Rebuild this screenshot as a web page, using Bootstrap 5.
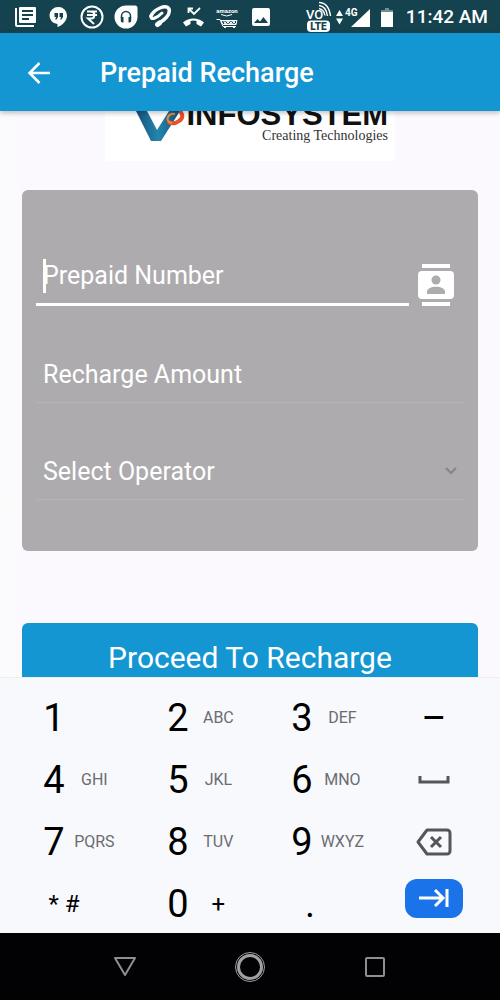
<!DOCTYPE html>
<html lang="en">
<head>
<meta charset="utf-8">
<meta name="viewport" content="width=device-width, initial-scale=1">
<title>Prepaid Recharge</title>
<link href="https://cdn.jsdelivr.net/npm/bootstrap@5.3.0/dist/css/bootstrap.min.css" rel="stylesheet">
<style>
  :root { --brand: #1496d3; }
  body { font-family: Roboto, sans-serif; background: #fbf9fe; }
  .screen { height: 100vh; }
  .status-bar { background: #14434f; height: 33px; padding-left: 14px; padding-right: 12px; }
  .status-bar svg { display: block; flex: none; }
  .notices { gap: 10px; }
  .clock { font-size: 19px; font-weight: 500; line-height: 24px; }
  .app-bar { background: var(--brand); height: 78px; padding: 2px 24px 0; z-index: 2; box-shadow: 0 2px 5px rgba(0,0,0,.25); }
  .app-title { font-size: 27px; font-weight: 500; line-height: 36px; margin-left: 46px; }
  .content-area { flex: 1 1 0; min-height: 0; padding: 0 22px; background: linear-gradient(90deg, #fcfbfb, #fbf9fe 24px); }
  .brand-logo { width: 290px; height: 50px; background: #fff; padding-right: 7px; padding-bottom: 16px; }
  .brand-mark { width: 56px; height: 34px; align-self: flex-end; }
  .brand-name { font: bold 31px/24px "Liberation Sans", sans-serif; color: #111; }
  .brand-tag { font: 14px/18px "Liberation Serif", serif; color: #333; }
  .recharge-card { background: #adabae; border-radius: 6px; margin-top: 29px; padding: 58px 12px 51px 14px; }
  .field, .field:focus { background: transparent; border: 0; border-bottom: 1px solid #b4b3b6; border-radius: 0; box-shadow: none; color: #fff; font-size: 25px; line-height: 32px; padding: 11px 7px; height: 56px; }
  .field::placeholder { color: #fff; opacity: 1; }
  .field-active, .field-active:focus { border-bottom: 3px solid #fff; height: 58px; }
  .caret { left: 7px; top: 11px; width: 3px; height: 34px; background: #fff; }
  .field-stack { gap: 41px; }
  .chevron { right: 7px; top: 22px; pointer-events: none; }
  .contacts { margin: 0 10px 0 8px; }
  .proceed { background: var(--brand); color: #fff; font-size: 30px; line-height: 36px; padding: 17px; border: 0; border-radius: 6px; margin-top: 72px; }
  .proceed:hover { background: #1087c0; color: #fff; }
  .keypad { background: #f8f9fd; border-top: 1px solid #eceef1; padding: 9px 4px 0 0; height: 256px; z-index: 2; }
  .key { height: 62px; border: 0; background: none; padding: 0; color: #000; font-size: 38px; line-height: 44px; }
  .key-digit { padding-left: 43px; text-align: left; }
  .key-digit > span { width: 22px; text-align: center; }
  .key-digit > small { width: 60px; text-align: center; font-size: 16px; line-height: 20px; color: #6b6c70; }
  .key .sign { font-size: 24px; color: #000; }
  .key-next { background: #1a73e8; border: 0; border-radius: 12px; width: 58px; height: 39px; margin-bottom: 12px; }
  .system-nav { background: #020103; height: 67px; }
</style>
</head>
<body>
<div class="screen d-flex flex-column overflow-hidden">

  <div class="status-bar d-flex align-items-center justify-content-between text-white flex-shrink-0">
    <div class="notices d-flex align-items-center">
      <svg width="23" height="24" viewBox="0 0 23 24" fill="#fff"><path d="M6 2h15a1 1 0 0 1 1 1v14a1 1 0 0 1-1 1H6a1 1 0 0 1-1-1V3a1 1 0 0 1 1-1zm2 3v2h11V5zm0 4v2h11V9zm0 4v2h7v-2z" fill-rule="evenodd"/><path d="M1 3h2v17h17v2H3a2 2 0 0 1-2-2z"/></svg>
      <svg width="23" height="24" viewBox="0 0 23 24"><path d="M11.500 2a8.500 8.500 0 0 0-1 17v3c5-2 9.500-6 9.500-11.500A8.500 8.500 0 0 0 11.500 2z" fill="#fff"/><path d="M7.500 8h3.500v4l-1.500 2.500H8.200L9 12H7.500zM12.500 8H16v4l-1.500 2.500h-1.300L14 12h-1.500z" fill="#14434f"/></svg>
      <svg width="24" height="24" viewBox="0 0 24 24" fill="none" stroke="#fff"><circle cx="12" cy="12" r="10.500" stroke-width="2"/><path d="M7 6.500h10M7 10h10M8 6.500h3c4.500 0 4.500 7 0 7H8l6 5.500" stroke-width="2"/></svg>
      <svg width="24" height="24" viewBox="0 0 24 24"><path d="M12 .5h9a2.500 2.500 0 0 1 2.500 2.500v9A11.500 11.500 0 1 1 12 .5z" fill="#fff"/><path d="M7.500 13v-2a4.500 4.500 0 0 1 9 0v2" fill="none" stroke="#14434f" stroke-width="1.500"/><path d="M6.800 12h2.700v5.500H8.500a1.700 1.700 0 0 1-1.700-1.700zM14.500 12h2.700v3.800a1.700 1.700 0 0 1-1.700 1.700h-1z" fill="#14434f"/></svg>
      <svg width="24" height="24" viewBox="0 0 24 24" fill="none" stroke="#fff" stroke-linecap="round" stroke-linejoin="round"><path d="M3 11C6 4 18-1 21 4c2 6-6 12-10 14" stroke-width="3.500"/><path d="M3 11c-1 5 6 2 11-3" stroke-width="3"/><path d="M9.500 19.500l2-1.500" stroke-width="5"/></svg>
      <svg width="23" height="24" viewBox="0 0 23 24"><path d="M7 4l5 5 6-6M6.500 8V3.500H11" fill="none" stroke="#fff" stroke-width="1.800"/><path d="M1 17.500c6-5.500 15-5.500 21 0l-3 4-4.500-2.500v-3q-3-1-6 0v3L4 21.500z" fill="#fff"/></svg>
      <svg width="24" height="24" viewBox="0 0 24 24" fill="none" stroke="#fff"><text x="12" y="8" text-anchor="middle" font-family="Roboto, sans-serif" font-size="6" font-weight="700" fill="#fff" stroke="none">amazon</text><path d="M6 9.500q6 3 11 0M1.500 14.500H5l3 7h13M6 15.500h16l-1 4H8z"/><path d="M8 15l3 4.500 3-4 3 4 3-4M9 19.500l3-4 3 4 3-4 3 4"/><path d="M9 22.500h2M18 22.500h2"/></svg>
      <svg width="24" height="24" viewBox="0 0 24 24"><path d="M5 3h14a2 2 0 0 1 2 2v14a2 2 0 0 1-2 2H5a2 2 0 0 1-2-2V5a2 2 0 0 1 2-2zm0 15h14l-4.500-6-3.500 4.500L8.500 14z" fill="#fff" fill-rule="evenodd"/></svg>
    </div>
    <div class="d-flex align-items-center">
      <svg width="26" height="32" viewBox="0 0 26 32"><text x="0" y="18" font-family="Roboto, sans-serif" font-size="13" font-weight="500" fill="#fff">VO</text><path d="M13 7.500q5 1 6 7M13 4.500q7 .5 8.500 10.500M13 1.500q9.500 0 11.500 13.500" fill="none" stroke="#fff" stroke-width="1.400"/><rect x="1" y="19.500" width="23" height="11.500" rx="4" fill="#fff"/><text x="12.500" y="29" text-anchor="middle" font-family="Roboto, sans-serif" font-size="10" font-weight="900" fill="#14434f">LTE</text></svg>
      <svg class="ms-1" width="36" height="24" viewBox="0 0 36 24" fill="#fff"><path d="M0 11l3.500-6L7 11zM0 13.500h7l-3.500 6zM34 4v18H15z"/><text x="9" y="11" font-family="Roboto, sans-serif" font-size="10" font-weight="700">4G</text></svg>
      <svg width="34" height="24" viewBox="0 0 34 24" fill="#fff"><path d="M13 5V3h4v2h4v3H9V5z" opacity=".4"/><path d="M9 7h12v15H9z"/></svg>
      <span class="clock">11:42 AM</span>
    </div>
  </div>

  <header class="app-bar d-flex align-items-center text-white flex-shrink-0 position-relative">
    <button class="btn p-0 border-0 text-white d-flex" type="button" aria-label="Back">
      <svg width="30" height="30" viewBox="0 0 30 30" fill="none" stroke="currentColor" stroke-width="2.500"><path d="M26 15H6M15.500 5L5.500 15l10 10"/></svg>
    </button>
    <h1 class="app-title mb-0">Prepaid Recharge</h1>
  </header>

  <main class="content-area overflow-hidden">
    <div class="brand-logo mx-auto d-flex justify-content-end overflow-hidden">
      <svg class="brand-mark" viewBox="0 0 56 34"><defs><linearGradient id="blade"><stop offset="0" stop-color="#174f7a"/><stop offset=".5" stop-color="#2386ac"/><stop offset="1" stop-color="#174f7a"/></linearGradient></defs><path d="M6 0h11l10 19L39 0h11L31 30H21z" fill="url(#blade)"/><path d="M50 0q5 6-1 10-5 4-11 1" fill="none" stroke="#e9502c" stroke-width="4"/><path d="M42 12q-6-1-4-6 2-4 7-3" fill="none" stroke="#f08a35" stroke-width="2"/></svg>
      <div class="d-flex flex-column align-items-end justify-content-end">
        <div class="brand-name">INFOSYSTEM</div>
        <div class="brand-tag">Creating Technologies</div>
      </div>
    </div>

    <form>
      <div class="recharge-card field-stack d-flex flex-column">
        <div class="d-flex align-items-end">
          <div class="position-relative flex-grow-1">
            <input class="form-control field field-active" type="tel" placeholder="Prepaid Number" aria-label="Prepaid Number">
            <span class="caret position-absolute"></span>
          </div>
          <button class="btn p-0 border-0 contacts" type="button" aria-label="Pick from contacts">
            <svg class="d-block" width="39" height="42" viewBox="0 1 39 42" fill="#fff"><path d="M5 1h28v4H5zM5 39h28v4H5z"/><path d="M5 8h28a4 4 0 0 1 4 4v20a4 4 0 0 1-4 4H5a4 4 0 0 1-4-4V12a4 4 0 0 1 4-4z"/><g fill="#adabae"><circle cx="19" cy="17" r="4.500"/><path d="M10 31v-2c0-7 18-7 18 0v2z"/></g></svg>
          </button>
        </div>
        <input class="form-control field" type="text" inputmode="numeric" placeholder="Recharge Amount" aria-label="Recharge Amount">
        <div class="position-relative">
          <select class="form-control field" aria-label="Select Operator"><option>Select Operator</option></select>
          <svg class="chevron position-absolute" width="14" height="10" viewBox="0 0 14 10" fill="none" stroke="#858487" stroke-width="2"><path d="M1 2l5 5 5-5"/></svg>
        </div>
      </div>
      <button class="btn proceed w-100" type="button">Proceed To Recharge</button>
    </form>
  </main>

  <section class="keypad flex-shrink-0 position-relative" aria-label="Keypad">
    <div class="row row-cols-4 g-0">
      <button class="key key-digit d-flex align-items-center" type="button"><span>1</span></button>
      <button class="key key-digit d-flex align-items-center" type="button"><span>2</span><small>ABC</small></button>
      <button class="key key-digit d-flex align-items-center" type="button"><span>3</span><small>DEF</small></button>
      <button class="key" type="button" aria-label="Dash"><span class="d-block">–</span></button>
      <button class="key key-digit d-flex align-items-center" type="button"><span>4</span><small>GHI</small></button>
      <button class="key key-digit d-flex align-items-center" type="button"><span>5</span><small>JKL</small></button>
      <button class="key key-digit d-flex align-items-center" type="button"><span>6</span><small>MNO</small></button>
      <button class="key d-flex align-items-center justify-content-center" type="button" aria-label="Space"><svg width="32" height="10" viewBox="0 0 32 10" fill="none" stroke="#55565a" stroke-width="3"><path d="M2 1v6h28V1"/></svg></button>
      <button class="key key-digit d-flex align-items-center" type="button"><span>7</span><small>PQRS</small></button>
      <button class="key key-digit d-flex align-items-center" type="button"><span>8</span><small>TUV</small></button>
      <button class="key key-digit d-flex align-items-center" type="button"><span>9</span><small>WXYZ</small></button>
      <button class="key d-flex align-items-center justify-content-center" type="button" aria-label="Delete"><svg width="36" height="28" viewBox="0 0 36 28" fill="none" stroke="#55565a" stroke-width="3" stroke-linejoin="round"><path d="M11 2h20a3 3 0 0 1 3 3v18a3 3 0 0 1-3 3H11L2 14zM15 9l10 10M25 9L15 19"/></svg></button>
      <button class="key d-flex align-items-center justify-content-center" type="button"><span class="sign ps-1">* #</span></button>
      <button class="key key-digit d-flex align-items-center" type="button"><span>0</span><small class="sign">+</small></button>
      <button class="key" type="button">.</button>
      <div class="key d-flex align-items-center justify-content-center"><button class="key-next d-flex align-items-center justify-content-center" type="button" aria-label="Next field"><svg width="32" height="20" viewBox="0 0 32 20" fill="none" stroke="#fff" stroke-width="3"><path d="M1 10h24M17 2l8 8-8 8M29 1v18"/></svg></button></div>
    </div>
  </section>

  <nav class="system-nav flex-shrink-0 d-flex align-items-center" aria-label="System">
    <div class="row row-cols-4 g-0 justify-content-center w-100 text-center">
      <button class="btn border-0 p-0" type="button" aria-label="Back"><svg width="24" height="32" viewBox="0 0 24 32" fill="none" stroke="#8f8e90" stroke-width="2" stroke-linejoin="round"><path d="M2 7h20l-10 17z"/></svg></button>
      <button class="btn border-0 p-0" type="button" aria-label="Home"><svg width="32" height="32" viewBox="0 0 32 32" fill="none" stroke="#a09fa1"><circle cx="16" cy="16" r="14.500"/><circle cx="16" cy="16" r="11.500" stroke-width="3"/></svg></button>
      <button class="btn border-0 p-0" type="button" aria-label="Recent apps"><svg width="20" height="32" viewBox="0 0 20 32" fill="none" stroke="#8f8e90" stroke-width="2"><rect x="1" y="7" width="18" height="18" rx="1"/></svg></button>
    </div>
  </nav>
</div>
<script src="https://cdn.jsdelivr.net/npm/bootstrap@5.3.0/dist/js/bootstrap.bundle.min.js"></script>
</body>
</html>
